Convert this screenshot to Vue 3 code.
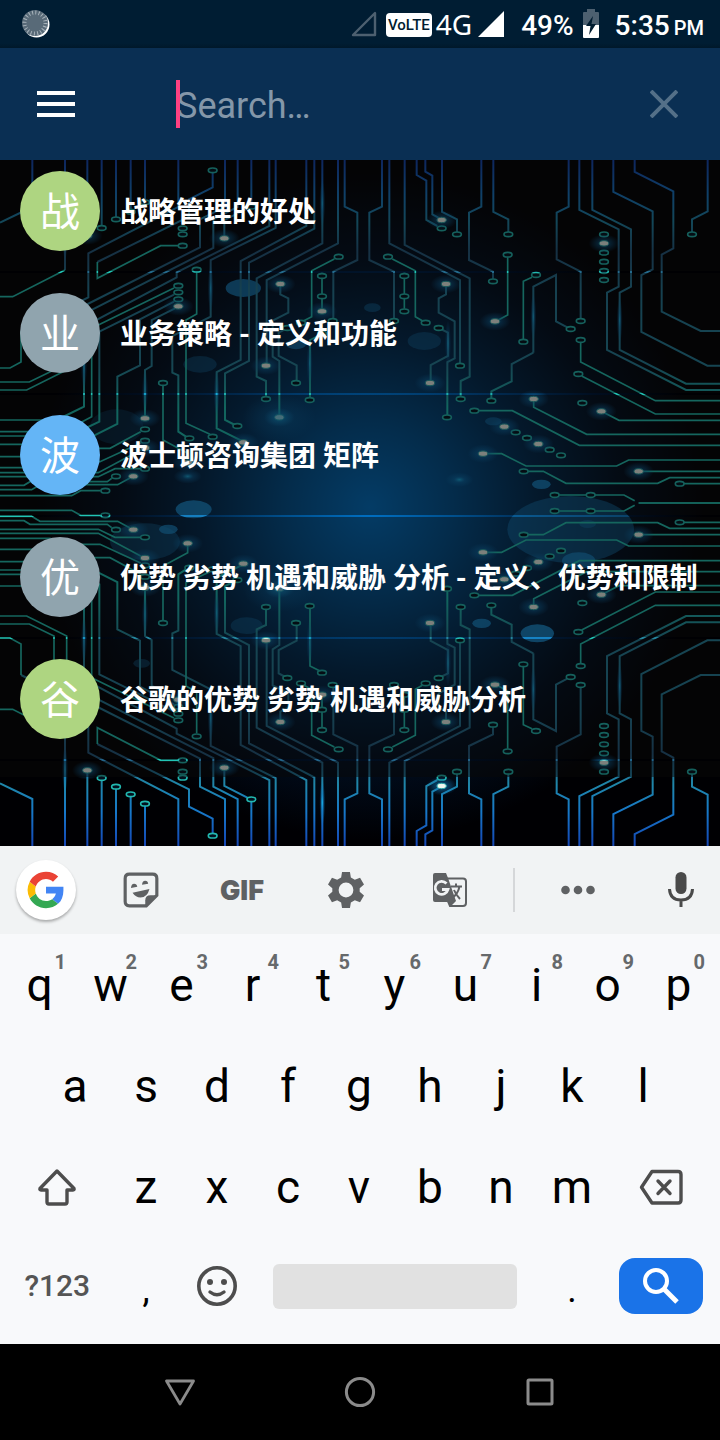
<template>
  <div class="phone">
    <!-- status bar -->
    <div class="status">
      <svg class="spinner" viewBox="0 0 30 30" width="30" height="30">
        <circle cx="15.5" cy="15.5" r="13" fill="#fff" />
        <circle cx="14" cy="14" r="13" fill="#586a78" />
        <circle cx="14" cy="14" r="10.5" fill="none" stroke="#a9b4bc" stroke-width="4" stroke-dasharray="1 2.3" />
      </svg>
      <div class="status-right">
        <svg class="sim" viewBox="0 0 28 28" width="28" height="28">
          <path d="M25 3V25H3Z" fill="none" stroke="#4d6070" stroke-width="2.4" stroke-linejoin="round" />
        </svg>
        <span class="volte">VoLTE</span>
        <span class="net">4G</span>
        <svg class="signal" viewBox="0 0 28 28" width="28" height="28">
          <path d="M26 1V27H0Z" fill="#fff" />
        </svg>
        <span class="percent">49%</span>
        <svg class="battery" viewBox="0 0 16 30" width="16" height="30">
          <path d="M4 0H12V3H15Q16 3 16 4V16H0V4Q0 3 1 3H4Z" fill="#4d6070" />
          <path d="M0 16H16V28Q16 29 15 29H1Q0 29 0 28Z" fill="#fff" />
          <path d="M10 7L3 17H7.5L6 26L13 15H8.500Z" fill="#001c30" />
        </svg>
        <span class="time">5:35</span>
        <span class="pm">PM</span>
      </div>
    </div>

    <!-- search bar -->
    <header class="bar">
      <button class="plain menu" aria-label="Menu">
        <svg viewBox="0 0 38 26" width="38" height="26">
          <path d="M0 2H38M0 13H38M0 24H38" stroke="#fff" stroke-width="4" />
        </svg>
      </button>
      <div class="search">
        <input v-model="query" type="text" placeholder="Search…" aria-label="Search" />
        <span class="caret"></span>
      </div>
      <button class="plain clear" aria-label="Clear" @click="query = ''">
        <svg viewBox="0 0 28 28" width="28" height="28">
          <path d="M1 1L27 27M27 1L1 27" stroke="#547088" stroke-width="4" />
        </svg>
      </button>
    </header>

    <!-- topic list over the circuit board -->
    <main class="content">
      <svg class="board" viewBox="0 0 2160 2058" preserveAspectRatio="xMidYMid slice" aria-hidden="true">
        <defs>
          <radialGradient id="sky" gradientUnits="userSpaceOnUse" cx="1110" cy="1040" r="1000">
            <stop offset="0" stop-color="#0070c4" />
            <stop offset="0.25" stop-color="#00508e" />
            <stop offset="0.5" stop-color="#012a50" />
            <stop offset="0.75" stop-color="#010e20" />
            <stop offset="1" stop-color="#000003" />
          </radialGradient>
          <linearGradient id="wire" gradientUnits="userSpaceOnUse" x1="0" y1="0" x2="0" y2="1029">
            <stop offset="0" stop-color="#1445b4" />
            <stop offset="0.1" stop-color="#1778c8" />
            <stop offset="0.18" stop-color="#1f86a8" />
            <stop offset="0.27" stop-color="#24597f" />
            <stop offset="0.38" stop-color="#247a98" />
            <stop offset="0.6" stop-color="#25829c" />
            <stop offset="0.72" stop-color="#1cc2b4" />
            <stop offset="1" stop-color="#1cc2b4" />
          </linearGradient>
          <radialGradient id="glow">
            <stop offset="0" stop-color="#18b4e8" stop-opacity="0.9" />
            <stop offset="0.4" stop-color="#0e7cc0" stop-opacity="0.45" />
            <stop offset="1" stop-color="#0e7cc0" stop-opacity="0" />
          </radialGradient>
          <g id="circuit">
            <path v-for="d in wires" :key="d" :d="d" fill="none" stroke="url(#wire)" stroke-width="6" />
            <path v-for="d in traces" :key="d" :d="d" fill="none" stroke="#22c4b4" stroke-width="5" />
            <ellipse v-for="(s, i) in streaks" :key="'s' + i" :cx="s[0]" :cy="s[1]" rx="9" ry="70" fill="url(#glow)" />
            <ellipse v-for="(n, i) in rings" :key="'r' + i" :cx="n[0]" :cy="n[1]" rx="13" ry="7" fill="#02101e" stroke="#22b8b0" stroke-width="5" />
            <g v-for="(n, i) in lamps" :key="'l' + i">
              <ellipse :cx="n[0]" :cy="n[1]" rx="46" ry="28" fill="url(#glow)" />
              <ellipse :cx="n[0]" :cy="n[1]" rx="14" ry="8" fill="#f0f8f0" stroke="#2aa6a8" stroke-width="3" />
            </g>
          </g>
        </defs>
        <rect width="2160" height="2058" fill="url(#sky)" />
        <ellipse v-for="(b, i) in bubbles" :key="'b' + i" :cx="b[0]" :cy="b[1]" :rx="b[2]" :ry="b[3]" fill="#1a94dc" :opacity="b[4]" />
        <use href="#circuit" />
        <use href="#circuit" transform="translate(0 2058) scale(1 -1)" />
        <ellipse cx="838" cy="772" rx="110" ry="70" fill="url(#glow)" opacity="0.6" />
        <ellipse cx="838" cy="1286" rx="110" ry="70" fill="url(#glow)" opacity="0.6" />
        <ellipse cx="563" cy="949" rx="42" ry="22" fill="url(#glow)" />
        <ellipse cx="1378" cy="959" rx="42" ry="22" fill="url(#glow)" />
      </svg>

      <ul class="topics">
        <li v-for="t in topics" :key="t.title" class="topic">
          <span class="avatar" :class="t.tone">{{ t.title[0] }}</span>
          <span class="title">{{ t.title }}</span>
        </li>
        <li class="tail"></li>
      </ul>
    </main>

    <!-- keyboard -->
    <section class="keyboard">
      <div class="tools">
        <button class="plain tool first" aria-label="Google">
          <span class="g-disc">
            <svg viewBox="0 0 48 48" width="38" height="38">
              <path fill="#4285f4" d="M46 20H24v8.500h12.500c-.8 3-2.400 5.500-4.800 7.200l7.500 5.800C43.600 37.700 46 31.700 46 24.500z" />
              <path fill="#34a853" d="M24 47c6.200 0 11.400-2 15.200-5.500L31.700 35.700c-2 1.400-4.700 2.300-7.700 2.300-6 0-11-4-12.900-9.500l-7.700 6C7.200 42 15 47 24 47z" />
              <path fill="#fbbc05" d="M11.100 28.500a14 14 0 0 1 0-9l-7.700-6a23 23 0 0 0 0 21z" />
              <path fill="#ea4335" d="M24 10c3.400 0 6.400 1.200 8.800 3.500l6.600-6.600C35.400 3.200 30.200 1 24 1 15 1 7.200 6 3.400 13.500l7.700 6C13 14 18 10 24 10z" />
            </svg>
          </span>
        </button>
        <button class="plain tool second" aria-label="Stickers">
          <svg viewBox="0 0 36 36" width="38" height="38">
            <path d="M7 3H29Q33 3 33 7V23L23 33H7Q3 33 3 29V7Q3 3 7 3Z" fill="none" stroke="#5f6163" stroke-width="3" />
            <path d="M22 34V28Q22 23 27 23H34Z" fill="#5f6163" />
            <path d="M8.500 16Q8.800 12 11.500 12Q14 12 14.500 15ZM19 13Q19.200 9.200 22 9.200Q24.500 9.200 24.800 12ZM10 20.500L26 17Q24 25 17.500 25Q13 25 10 20.500Z" fill="#5f6163" />
          </svg>
        </button>
        <button class="plain tool gif">GIF</button>
        <button class="plain tool" aria-label="Settings">
          <svg viewBox="2 2 20 20" width="36" height="36">
            <path fill="#5f6163" fill-rule="evenodd" d="M9.800 2H14.200L14.700 5L16.900 6.300L19.800 5.200L22 9L19.600 11V13L22 15L19.800 18.800L16.900 17.700L14.700 19L14.200 22H9.800L9.300 19L7.100 17.700L4.200 18.800L2 15L4.400 13V11L2 9L4.200 5.200L7.100 6.300L9.300 5ZM12 7.900a4.100 4.100 0 1 0 0 8.200a4.100 4.100 0 0 0 0-8.200Z" />
          </svg>
        </button>
        <button class="plain tool" aria-label="Translate">
          <svg viewBox="0 0 36 36" width="36" height="36">
            <path d="M15 6.500H31Q34 6.500 34 9.500V31Q34 34 31 34H18L15 27" fill="none" stroke="#5f6163" stroke-width="2" />
            <path d="M3 1H14L16 6L24 29L18 35L16 30H3Q1 30 1 28V3Q1 1 3 1Z" fill="#5f6163" />
            <path d="M14.500 11.500A6.500 6.500 0 1 0 16 17.500H10" fill="none" stroke="#f1f3f4" stroke-width="2.800" />
            <path d="M19 14.500H30M24 11.500V14.500M27.500 14.500Q26 22 20 26M22 18Q24 23 28 27" fill="none" stroke="#5f6163" stroke-width="2" />
          </svg>
        </button>
        <span class="divider"></span>
        <button class="plain tool" aria-label="More">
          <svg viewBox="0 0 34 10" width="34" height="10" fill="#5f6163">
            <circle cx="4.500" cy="5" r="4.300" />
            <circle cx="17" cy="5" r="4.300" />
            <circle cx="29.500" cy="5" r="4.300" />
          </svg>
        </button>
        <button class="plain tool last" aria-label="Voice input">
          <svg viewBox="0 0 26 36" width="26" height="36">
            <rect x="7.500" y="0" width="11" height="22" rx="5.500" fill="#4a4a4a" />
            <path d="M1.500 17Q2 28 13 28T24.500 17M13 28V35" fill="none" stroke="#4a4a4a" stroke-width="3" />
          </svg>
        </button>
      </div>

      <div class="keys">
        <div class="keyrow">
          <button v-for="(k, i) in topRow" :key="k" class="plain key">
            {{ k }}<span class="hint">{{ (i + 1) % 10 }}</span>
          </button>
        </div>
        <div class="keyrow inset">
          <button v-for="k in midRow" :key="k" class="plain key">{{ k }}</button>
        </div>
        <div class="keyrow">
          <button class="plain key wide" aria-label="Shift">
            <svg viewBox="0 0 40 38" width="40" height="38">
              <path d="M20 3L37 20.500Q37.500 22 36 22H30V34Q30 36 28 36H12Q10 36 10 34V22H4Q2.500 22 3 20.500Z" fill="none" stroke="#4d4d4d" stroke-width="3.400" stroke-linejoin="round" />
            </svg>
          </button>
          <button v-for="k in lowRow" :key="k" class="plain key">{{ k }}</button>
          <button class="plain key wide" aria-label="Backspace">
            <svg viewBox="0 0 44 36" width="44" height="36">
              <path d="M13 2.500H39Q42 2.500 42 5.500V31Q42 34 39 34H13L2.500 18.200Z" fill="none" stroke="#4d4d4d" stroke-width="3.400" stroke-linejoin="round" />
              <path d="M19 12L31 24.500M31 12L19 24.500" stroke="#4d4d4d" stroke-width="3.400" stroke-linecap="round" />
            </svg>
          </button>
        </div>
        <div class="keyrow bottom">
          <button class="plain key wide mode">?123</button>
          <button class="plain key punct">,</button>
          <button class="plain key" aria-label="Emoji">
            <svg viewBox="0 0 40 40" width="40" height="40">
              <circle cx="20" cy="20" r="18.200" fill="none" stroke="#4d4d4d" stroke-width="3.600" />
              <circle cx="13" cy="16" r="3" fill="#4d4d4d" />
              <circle cx="27" cy="16" r="3" fill="#4d4d4d" />
              <path d="M13 26Q20 31.500 27 26" fill="none" stroke="#4d4d4d" stroke-width="3.400" stroke-linecap="round" />
            </svg>
          </button>
          <button class="plain key space" aria-label="Space"><span class="space-bar"></span></button>
          <button class="plain key punct">.</button>
          <button class="plain key wide" aria-label="Search">
            <span class="go">
              <svg viewBox="0 0 36 36" width="36" height="36">
                <circle cx="13" cy="13" r="11" fill="none" stroke="#fff" stroke-width="4" />
                <path d="M21 21L34 34" stroke="#fff" stroke-width="5" />
              </svg>
            </span>
          </button>
        </div>
      </div>
    </section>

    <!-- system navigation -->
    <nav class="sysnav">
      <button class="plain" aria-label="Back">
        <svg viewBox="0 0 32 32" width="32" height="32">
          <path d="M2.500 5H29.500L16 28Z" fill="none" stroke="#8b8b8b" stroke-width="2.800" stroke-linejoin="round" />
        </svg>
      </button>
      <button class="plain" aria-label="Home">
        <svg viewBox="0 0 32 32" width="32" height="32">
          <circle cx="16" cy="16" r="13.600" fill="none" stroke="#8b8b8b" stroke-width="3" />
        </svg>
      </button>
      <button class="plain" aria-label="Recent apps">
        <svg viewBox="0 0 32 32" width="32" height="32">
          <rect x="4" y="4" width="24" height="24" rx="1" fill="none" stroke="#8b8b8b" stroke-width="3" />
        </svg>
      </button>
    </nav>
  </div>
</template>

<script setup>
import { ref } from "vue";

const query = ref("");

const topics = [
  { title: "战略管理的好处", tone: "green" },
  { title: "业务策略 - 定义和功能", tone: "grey" },
  { title: "波士顿咨询集团 矩阵", tone: "blue" },
  { title: "优势 劣势 机遇和威胁 分析 - 定义、优势和限制", tone: "grey" },
  { title: "谷歌的优势 劣势 机遇和威胁分析", tone: "green" },
];

const topRow = "qwertyuiop".split("");
const midRow = "asdfghjkl".split("");
const lowRow = "zxcvbnm".split("");

// upper half of the board, the lower half is its reflection
const wires = [
  "M97 0V141L0 188",
  "M195 0V330",
  "M262 0V220",
  "M305 0V197",
  "M348 0V172",
  "M392 0V148",
  "M435 0V120",
  "M535 0V141L265 280V412L63 513",
  "M638 38V82L567 118V170L292 306",
  "M675 0V141L600 178V262L162 483",
  "M713 0V141L640 178V264L200 488",
  "M754 0V134",
  "M808 0V198L530 337V352L252 500V740L170 780",
  "M827 0V204L632 300V470L517 528V638L535 646V815L558 830",
  "M919 0V198L722 303V600L650 636V805L730 845",
  "M943 0V206L747 308V603L675 640V780L705 795",
  "M967 0V250L770 355V650L798 663V710",
  "M1014 0V250L800 360V610",
  "M1034 0V140L1072 158V300L1000 335V475",
  "M673 228V180L742 145",
  "M841 372V403L865 415V458L818 482V590L838 603V765",
  "M862 504L836 518V588L890 616V660",
  "M525 445L455 480V618L435 630V768",
  "M522 425L420 478V616L352 650V792L200 868",
  "M522 404L298 515V785L220 822",
  "M1146 0V140L1108 158V300L1182 335V475",
  "M1168 0V250L1380 360V610",
  "M1214 0V255L1409 355V650L1382 663V710",
  "M1250 0V45L1279 62V180L1312 198",
  "M1276 0V35L1297 47V163L1315 173",
  "M1326 0V156L1371 178V216",
  "M1444 0V140L1407 158V300L1479 335V356",
  "M1480 0V156L1525 178V216",
  "M1706 0V140L1670 158V298L1742 335V475",
  "M1738 0V150L1856 208V380L1821 398V570L2058 690H2160",
  "M1777 0V150L1893 208V380L1859 398V570L2058 671H2160",
  "M1840 0V96L1958 154V328L1924 345V516L2122 617H2160",
  "M1904 0V36L2020 94V265L1985 284V455L2102 513H2160",
  "M2123 0V154L2076 178V216",
  "M1338 372V403L1316 415V458L1364 484V595L1342 606V765",
  "M1316 504L1344 518V588L1292 615V660",
  "M1600 578V380L1668 345V484L1702 502",
  "M1600 578L1535 612V664L1474 694V716",
];

const traces = [
  "M195 330L38 410H0",
  "M63 513V606L30 624H0",
  "M292 306V355L482 257H535",
  "M162 483V630L88 666H0",
  "M200 488V630L80 690H0",
  "M170 780H0M190 815H0M200 828H0M200 853H0",
  "M522 384L275 505V770L190 815",
  "M1003 297L935 332V470L910 483",
  "M966 356V446",
  "M960 525L930 540V712",
  "M590 338V462L558 480V790L630 823",
  "M489 677V840L563 880V900",
  "M422 815L330 865H270L200 890H0",
  "M422 849L300 905H200L150 923H0",
  "M422 870L295 938H0",
  "M422 926H345L295 950H0",
  "M390 954L353 974H120L95 989H0",
  "M335 955L322 965H90L72 976H0",
  "M302 992H242L215 1007H0",
  "M1177 297L1246 332V470L1267 482",
  "M1213 356V446",
  "M1523 292V465L1495 480",
  "M1596 352L1570 364V538",
  "M1742 547V606L1966 722H2160",
  "M1745 648L1966 762H2160",
  "M1601 717V742L1760 823H2160",
  "M1804 754L1857 781H2160",
  "M1436 752H1537L1738 856H2160",
  "M1450 881H1505L1578 918H1850L1886 900H2160",
  "M1584 934H1630L1698 970H1973L2009 953H2160",
  "M1916 934H2160",
  "M2052 971H2160",
  "M1676 1005H1760M1785 1005H1872L1904 1022",
  "M1916 1029H2160",
];

const rings = [
  [305, 204], [348, 178], [392, 155], [435, 127], [638, 31], [548, 205], [548, 223], [548, 257],
  [590, 329], [535, 377], [535, 397], [535, 418], [754, 140], [1016, 290], [966, 348], [966, 409],
  [998, 483], [903, 488], [862, 504], [966, 520], [888, 669], [798, 717], [929, 720], [489, 669],
  [712, 798], [638, 830], [568, 835], [435, 808], [435, 842], [435, 926], [348, 949], [316, 992],
  [1182, 483], [1380, 617], [1382, 717], [1325, 205], [1371, 223], [1479, 364], [1525, 223],
  [1523, 284], [1742, 483], [2076, 223], [1812, 223], [1812, 278], [1812, 305], [1812, 333],
  [1812, 360], [1608, 345], [1570, 545], [1712, 507], [1474, 722], [1742, 540], [1735, 642],
  [1747, 729], [1423, 752], [1547, 817], [1581, 834], [1649, 869], [1683, 886], [1571, 934],
  [2039, 971], [1664, 1005], [1772, 1005], [1164, 290], [1277, 488], [1213, 348], [1213, 409],
  [1213, 454], [1316, 504], [1341, 772],
];

const lamps = [
  [262, 227], [673, 235], [535, 439], [841, 372], [966, 454], [798, 617], [435, 775], [838, 772],
  [730, 847], [563, 908], [435, 864], [400, 949], [1325, 180], [1338, 372], [1485, 484], [1290, 669],
  [1601, 717], [1804, 754], [1513, 800], [1615, 852], [1449, 881], [1916, 934], [1812, 250],
];

const streaks = [
  [967, 130], [195, 230], [632, 385], [252, 620], [435, 695], [650, 700], [929, 610], [1600, 470],
  [1859, 480], [1344, 550],
];

// cx, cy, rx, ry, opacity
const bubbles = [
  [730, 384, 53, 27, 0.7],
  [600, 613, 50, 25, 0.3],
  [888, 553, 30, 15, 0.6],
  [1117, 443, 25, 13, 0.35],
  [1273, 543, 50, 27, 0.3],
  [350, 800, 80, 52, 0.18],
  [1480, 784, 25, 12, 0.4],
  [1624, 973, 28, 14, 0.75],
  [581, 1048, 54, 27, 0.8],
  [505, 1108, 28, 14, 0.7],
  [435, 1145, 105, 55, 0.3],
  [1712, 1108, 190, 100, 0.4],
  [1763, 1092, 25, 12, 0.3],
  [1736, 1202, 50, 25, 0.65],
  [740, 1397, 48, 25, 0.3],
  [1445, 1390, 28, 14, 0.75],
  [1612, 1420, 50, 27, 0.85],
  [425, 1510, 25, 13, 0.3],
];
</script>

<style>
body {
  background: #000;
}
</style>

<style scoped>
.phone {
  display: flex;
  flex-direction: column;
  min-height: 100vh;
  font-family: Roboto, "Noto Sans CJK SC", sans-serif;
  color: #fff;
}

.plain {
  display: flex;
  align-items: center;
  justify-content: center;
  padding: 0;
  border: 0;
  background: none;
  color: inherit;
  font: inherit;
  cursor: pointer;
}

/* status bar */
.status {
  display: flex;
  align-items: center;
  justify-content: space-between;
  height: 48px;
  padding: 0 16px 0 21px;
  background: linear-gradient(#001d33 90%, #00182a);
}
.status-right {
  display: flex;
  align-items: center;
  font-weight: 500;
  font-size: 28px;
  line-height: 48px;
}
.volte {
  margin: 2px 4px 0 8px;
  padding: 0 2px;
  border-radius: 4px;
  background: #fff;
  color: #001c30;
  font-size: 15px;
  line-height: 24px;
}
.net {
  font-family: "Noto Sans", sans-serif;
  font-weight: 400;
}
.signal {
  margin-left: 6px;
}
.percent,
.time {
  padding-top: 3px;
}
.percent {
  margin-left: 15px;
}
.battery {
  margin: 0 16px 0 9px;
}
.pm {
  margin: 7px 0 0 4px;
  font-size: 20px;
}

/* search bar */
.bar {
  display: flex;
  align-items: center;
  height: 112px;
  background: #0a2f53;
}
.menu {
  width: 112px;
  height: 112px;
}
.search {
  position: relative;
  flex: 1;
  margin-left: 64px;
}
.search input {
  display: block;
  width: 100%;
  height: 48px;
  padding: 4px 0 0;
  border: 0;
  outline: 0;
  background: none;
  color: #fff;
  font: inherit;
  font-size: 36px;
  box-sizing: border-box;
}
.search input::placeholder {
  color: #8497a9;
  opacity: 1;
}
.caret {
  position: absolute;
  left: 0;
  top: 0;
  width: 4px;
  height: 48px;
  background: #ff4081;
}
.clear {
  width: 112px;
  height: 112px;
}

/* list */
.content {
  position: relative;
  flex: 1;
  min-height: 686px;
  overflow: hidden;
}
.board {
  position: absolute;
  inset: 0;
  width: 100%;
  height: 100%;
}
.topics {
  position: relative;
  display: flex;
  flex-direction: column;
  gap: 2px;
  margin: 0;
  padding: 0;
  list-style: none;
}
.topic {
  display: flex;
  align-items: center;
  gap: 20px;
  padding: 20px;
  background: rgba(8, 8, 8, 0.5);
}
.topic:first-child {
  padding-top: 11px;
}
.tail {
  height: 16px;
  background: rgba(8, 8, 8, 0.5);
}
.avatar {
  flex: none;
  width: 80px;
  height: 80px;
  border-radius: 50%;
  font-size: 40px;
  line-height: 84px;
  text-align: center;
}
.green {
  background: #aed581;
}
.grey {
  background: #90a4ae;
}
.blue {
  background: #64b5f6;
}
.title {
  padding-top: 4px;
  font-size: 28px;
  font-weight: 700;
  line-height: 40px;
  white-space: nowrap;
}

/* keyboard */
.keyboard {
  background: #f8f9fb;
  color: #000;
}
.tools {
  display: flex;
  align-items: center;
  height: 88px;
  background: #f1f3f4;
}
.tool {
  flex: 104;
  height: 88px;
}
.first {
  flex: 92;
}
.second {
  flex: 98;
}
.last {
  flex: 78;
  padding-left: 12px;
}
.g-disc {
  display: flex;
  align-items: center;
  justify-content: center;
  width: 60px;
  height: 60px;
  border-radius: 50%;
  background: #fff;
  box-shadow: 0 2px 3px rgba(0, 0, 0, 0.3);
}
.gif {
  color: #5f6163;
  font-family: Inter, sans-serif;
  font-size: 27px;
  font-weight: 900;
}
.divider {
  width: 2px;
  height: 44px;
  margin: 0 11px;
  background: #d5d7d9;
}
.keys {
  padding: 0 6px 9px 4px;
}
.keyrow {
  display: flex;
  height: 101px;
}
.inset {
  padding: 0 5%;
}
.bottom {
  height: 98px;
}
.key {
  position: relative;
  flex: 1;
  font-size: 46px;
  line-height: 54px;
}
.hint {
  position: absolute;
  top: 16px;
  right: 9px;
  color: #66696b;
  font-size: 20px;
  font-weight: 700;
  line-height: 24px;
}
.wide {
  flex: 1.5;
}
.mode {
  color: #555;
  font-size: 30px;
  font-weight: 500;
}
.punct {
  padding-top: 8px;
  font-size: 36px;
}
.space {
  flex: 4;
}
.space-bar {
  flex: 1;
  height: 45px;
  margin: 0 20px;
  border-radius: 6px;
  background: #e1e1e1;
}
.go {
  display: flex;
  align-items: center;
  justify-content: center;
  width: 84px;
  height: 56px;
  border-radius: 16px;
  background: #1a73e8;
}

/* system navigation */
.sysnav {
  display: flex;
  justify-content: center;
  height: 96px;
  background: #000;
}
.sysnav .plain {
  width: 25%;
}
</style>
